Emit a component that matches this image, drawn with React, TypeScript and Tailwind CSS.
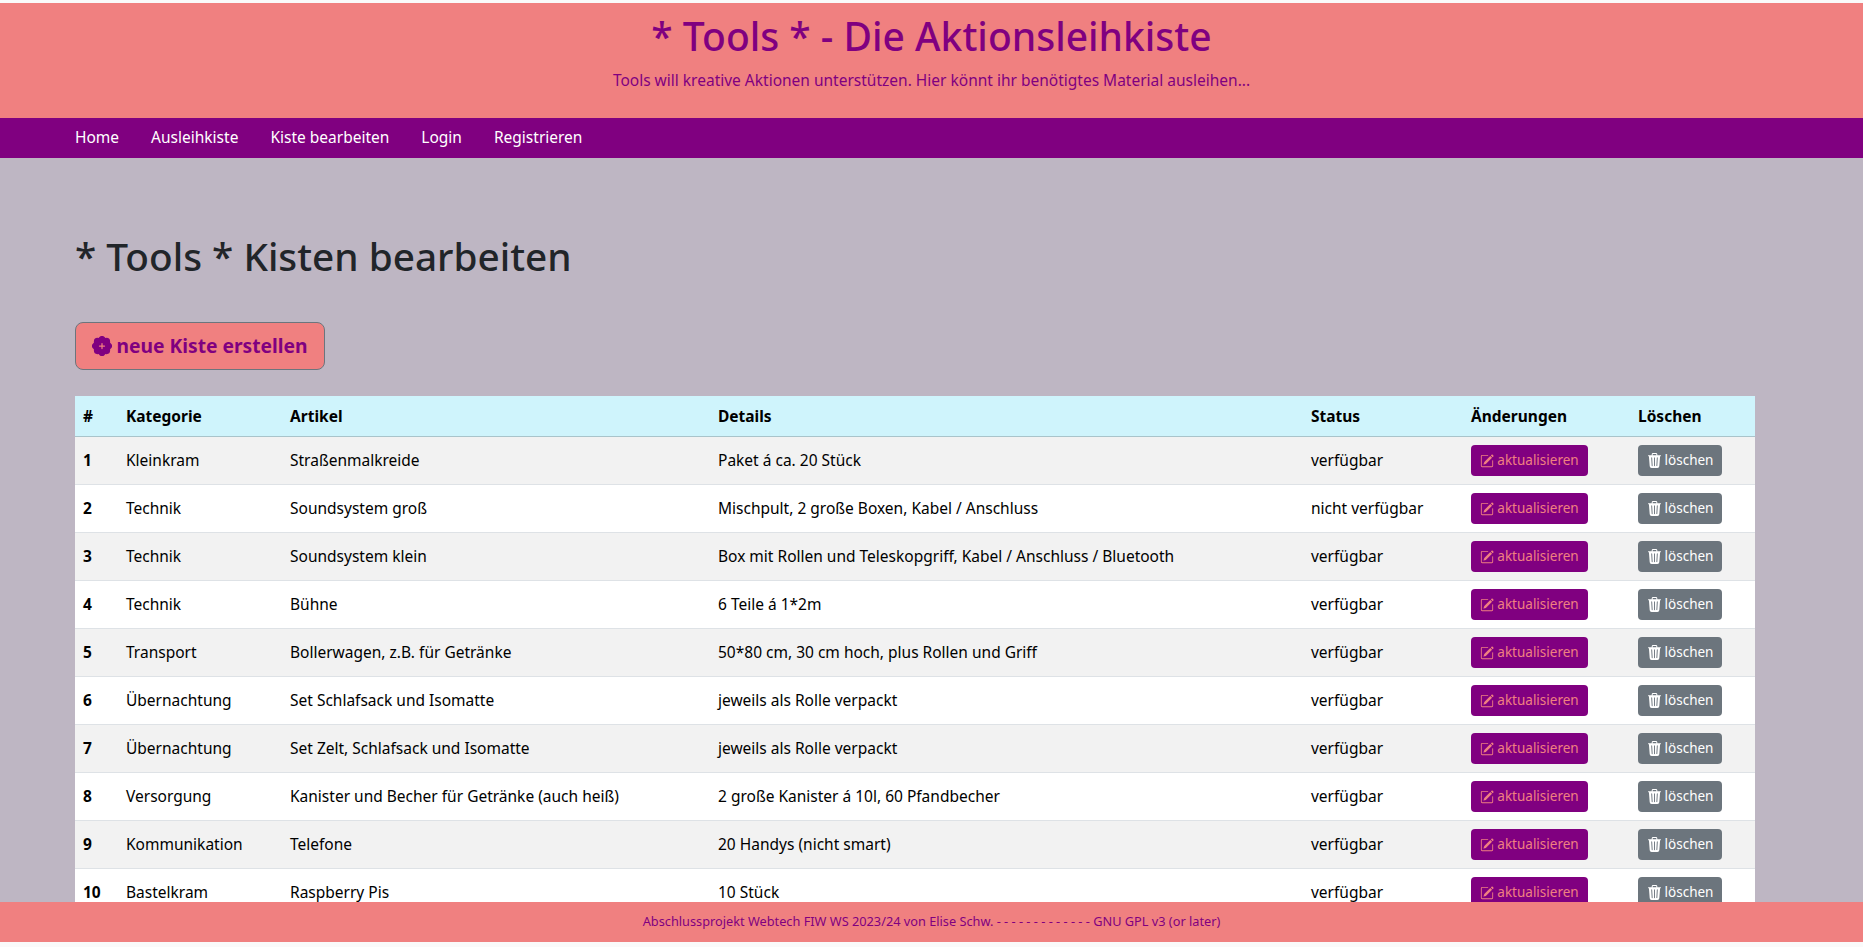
import { BsPatchPlusFill, BsPencilSquare, BsTrash3Fill } from 'react-icons/bs';

const rows = [
  ['1', 'Kleinkram', 'Straßenmalkreide', 'Paket á ca. 20 Stück', 'verfügbar'],
  ['2', 'Technik', 'Soundsystem groß', 'Mischpult, 2 große Boxen, Kabel / Anschluss', 'nicht verfügbar'],
  ['3', 'Technik', 'Soundsystem klein', 'Box mit Rollen und Teleskopgriff, Kabel / Anschluss / Bluetooth', 'verfügbar'],
  ['4', 'Technik', 'Bühne', '6 Teile á 1*2m', 'verfügbar'],
  ['5', 'Transport', 'Bollerwagen, z.B. für Getränke', '50*80 cm, 30 cm hoch, plus Rollen und Griff', 'verfügbar'],
  ['6', 'Übernachtung', 'Set Schlafsack und Isomatte', 'jeweils als Rolle verpackt', 'verfügbar'],
  ['7', 'Übernachtung', 'Set Zelt, Schlafsack und Isomatte', 'jeweils als Rolle verpackt', 'verfügbar'],
  ['8', 'Versorgung', 'Kanister und Becher für Getränke (auch heiß)', '2 große Kanister á 10l, 60 Pfandbecher', 'verfügbar'],
  ['9', 'Kommunikation', 'Telefone', '20 Handys (nicht smart)', 'verfügbar'],
  ['10', 'Bastelkram', 'Raspberry Pis', '10 Stück', 'verfügbar'],
];

const navItems = ['Home', 'Ausleihkiste', 'Kiste bearbeiten', 'Login', 'Registrieren'];

export default function App() {
  return (
    <div className="h-[947px] flex flex-col overflow-hidden bg-[#fafafa] pb-[5px] font-['Noto_Sans',sans-serif] text-[15.5px]">
      <header className="mt-[3px] h-[115px] shrink-0 bg-[#f08080] text-center text-[#800080]">
        <h1 className="pt-[9px] text-[39px] leading-[48px] font-medium">* Tools * - Die Aktionsleihkiste</h1>
        <p className="mt-[8px] text-[15.5px] leading-[24px]">
          Tools will kreative Aktionen unterstützen. Hier könnt ihr benötigtes Material ausleihen...
        </p>
      </header>

      <nav className="h-[40px] shrink-0 bg-[#800080] pl-[75px] pb-[1px] flex items-center gap-[32px] text-[15.5px] text-white">
        {navItems.map((item) => (
          <a key={item} href="#">{item}</a>
        ))}
      </nav>

      <main className="flex-1 min-h-0 overflow-hidden bg-[#beb6c3] px-[75px] pr-[108px]">
        <h2 className="mt-[74px] text-[38.75px] leading-[48px] font-medium text-[#212529]">* Tools * Kisten bearbeiten</h2>
        <button
          type="button"
          className="mt-[42px] h-[48px] w-[250px] flex items-center justify-center gap-[4px] rounded-lg border border-[#6c757d] bg-[#f08080] text-[19.25px] font-bold text-[#800080]"
        >
          <BsPatchPlusFill className="w-[20px] h-[20px]" />
          neue Kiste erstellen
        </button>

        <table className="mt-[26px] w-[1680px] table-fixed border-collapse text-left text-black">
          <colgroup>
            <col className="w-[43px]" />
            <col className="w-[164px]" />
            <col className="w-[428px]" />
            <col className="w-[593px]" />
            <col className="w-[160px]" />
            <col className="w-[167px]" />
            <col className="w-[125px]" />
          </colgroup>
          <thead>
            <tr className="h-[40px] bg-[#cff4fc] border-b border-[#a9c4cb]">
              {['#', 'Kategorie', 'Artikel', 'Details', 'Status', 'Änderungen', 'Löschen'].map((h) => (
                <th key={h} className="px-2 pt-[1px] font-bold">{h}</th>
              ))}
            </tr>
          </thead>
          <tbody>
            {rows.map((row, i) => (
              <tr key={row[0]} className={`h-[48px] border-b border-[#dee2e6] ${i % 2 === 0 ? 'bg-[#f2f2f2]' : 'bg-white'}`}>
                <td className="px-2 pt-[1px] font-bold">{row[0]}</td>
                <td className="px-2 pt-[1px]">{row[1]}</td>
                <td className="px-2 pt-[1px]">{row[2]}</td>
                <td className="px-2 pt-[1px]">{row[3]}</td>
                <td className="px-2 pt-[1px]">{row[4]}</td>
                <td className="px-2">
                  <button
                    type="button"
                    className="h-[31px] w-[117px] flex items-center justify-center gap-[3px] rounded bg-[#800080] pt-[1px] text-[13.5px] text-[#f08080]"
                  >
                    <BsPencilSquare className="w-[14px] h-[14px]" />
                    aktualisieren
                  </button>
                </td>
                <td className="px-2">
                  <button
                    type="button"
                    className="h-[31px] w-[84px] flex items-center justify-center gap-[3px] rounded bg-[#6c757d] pt-[1px] text-[13.5px] text-white"
                  >
                    <BsTrash3Fill className="w-[15px] h-[15px]" />
                    löschen
                  </button>
                </td>
              </tr>
            ))}
          </tbody>
        </table>
      </main>

      <footer className="h-[40px] shrink-0 bg-[#f08080] flex items-center justify-center text-[12.75px] text-[#800080]">
        Abschlussprojekt Webtech FIW WS 2023/24 von Elise Schw. - - - - - - - - - - - - - GNU GPL v3 (or later)
      </footer>
    </div>
  );
}
